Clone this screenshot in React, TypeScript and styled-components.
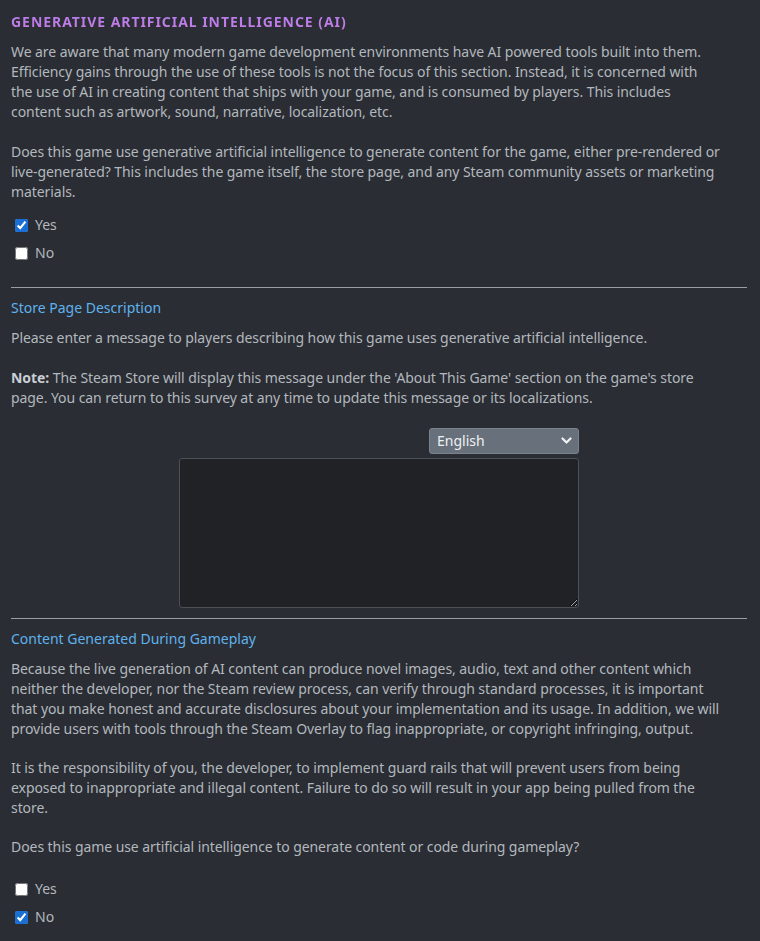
import React from "react";
import styled, { createGlobalStyle } from "styled-components";

const Global = createGlobalStyle`
  html, body { margin: 0; padding: 0; background: #2a2d33; }
  body { font-family: "Noto Sans", "Open Sans", Arial, sans-serif; }
`;

const Page = styled.div`
  background: #2a2d33;
  min-height: 941px;
  padding: 12px 13px 10px 11px;
  box-sizing: border-box;
  color: #b2b8be;
  font-size: 14px;
  line-height: 20px;
`;

const Title = styled.h2`
  margin: 0 0 10px;
  font-size: 14px;
  line-height: 20px;
  font-weight: 700;
  letter-spacing: 0.95px;
  text-transform: uppercase;
  display: inline-block;
  background: linear-gradient(180deg, #b47cf2 0%, #c97de0 100%);
  -webkit-background-clip: text;
  background-clip: text;
  color: transparent;
`;

const Paragraph = styled.p<{ $gap?: number }>`
  margin: 0 0 ${(p) => (p.$gap ?? 20)}px;
  padding-right: 26px;
  letter-spacing: -0.07px;
  color: #b2b8be;
`;

const Strong = styled.b`
  color: #c9cfd5;
  font-weight: 700;
`;

const Options = styled.div<{ $top: number }>`
  display: flex;
  flex-direction: column;
  margin-top: ${(p) => p.$top}px;
`;

const Option = styled.label`
  display: flex;
  align-items: center;
  height: 28px;
  color: #b2b8be;
  cursor: pointer;
`;

const Check = styled.input.attrs({ type: "checkbox" })`
  width: 13px;
  height: 13px;
  margin: 0 7px 0 4px;
  accent-color: #1a6fd4;
`;

const Divider = styled.hr<{ $top: number }>`
  border: none;
  height: 1px;
  background: #9a9ea3;
  margin: ${(p) => p.$top}px 0 10px;
`;

const SubTitle = styled.h3`
  margin: 0 0 10px;
  font-size: 14px;
  line-height: 20px;
  font-weight: 400;
  color: #5fb2ee;
`;

const EditorBlock = styled.div`
  display: flex;
  flex-direction: column;
  align-items: flex-end;
  width: 400px;
  margin: 0 auto;
  gap: 4px;
`;

const SelectWrap = styled.div`
  position: relative;
  width: 150px;
  height: 26px;
`;

const Select = styled.select`
  appearance: none;
  -webkit-appearance: none;
  width: 150px;
  height: 26px;
  box-sizing: border-box;
  padding: 0 24px 1px 7px;
  border: 1px solid #7a828c;
  border-radius: 3px;
  background: #67707b;
  color: #eef0f2;
  font-family: "Noto Sans", "Open Sans", Arial, sans-serif;
  font-size: 14px;
  outline: none;
`;

const Chevron = styled.svg`
  position: absolute;
  right: 7px;
  top: 8px;
  pointer-events: none;
`;

const TextArea = styled.textarea`
  display: block;
  width: 400px;
  height: 150px;
  box-sizing: border-box;
  background: #202226;
  border: 1px solid #4b4f56;
  border-radius: 3px;
  color: #dfe3e6;
  font-family: "Noto Sans", "Open Sans", Arial, sans-serif;
  font-size: 14px;
  outline: none;
  color-scheme: dark;
`;

export default function App() {
  return (
    <>
      <Global />
      <Page>
        <Title>Generative Artificial Intelligence (AI)</Title>
        <Paragraph>
          We are aware that many modern game development environments have AI powered tools built into them.
          Efficiency gains through the use of these tools is not the focus of this section. Instead, it is concerned with
          the use of AI in creating content that ships with your game, and is consumed by players. This includes
          content such as artwork, sound, narrative, localization, etc.
        </Paragraph>
        <Paragraph $gap={0}>
          Does this game use generative artificial intelligence to generate content for the game, either pre-rendered or
          live-generated? This includes the game itself, the store page, and any Steam community assets or marketing
          materials.
        </Paragraph>
        <Options $top={9}>
          <Option>
            <Check defaultChecked />
            Yes
          </Option>
          <Option>
            <Check />
            No
          </Option>
        </Options>

        <Divider $top={20} />
        <SubTitle>Store Page Description</SubTitle>
        <Paragraph>
          Please enter a message to players describing how this game uses generative artificial intelligence.
        </Paragraph>
        <Paragraph>
          <Strong>Note:</Strong> The Steam Store will display this message under the 'About This Game' section on the game's store
          page. You can return to this survey at any time to update this message or its localizations.
        </Paragraph>
        <EditorBlock>
          <SelectWrap>
            <Select defaultValue="english">
              <option value="english">English</option>
            </Select>
            <Chevron width="11" height="9" viewBox="0 0 11 9">
              <path d="M1.5 2.5 L5.5 6.5 L9.5 2.5" fill="none" stroke="#f2f2f2" strokeWidth="2.2" strokeLinecap="round" strokeLinejoin="round" />
            </Chevron>
          </SelectWrap>
          <TextArea />
        </EditorBlock>

        <Divider $top={10} />
        <SubTitle>Content Generated During Gameplay</SubTitle>
        <Paragraph $gap={19}>
          Because the live generation of AI content can produce novel images, audio, text and other content which
          neither the developer, nor the Steam review process, can verify through standard processes, it is important
          that you make honest and accurate disclosures about your implementation and its usage. In addition, we will
          provide users with tools through the Steam Overlay to flag inappropriate, or copyright infringing, output.
        </Paragraph>
        <Paragraph $gap={19}>
          It is the responsibility of you, the developer, to implement guard rails that will prevent users from being
          exposed to inappropriate and illegal content. Failure to do so will result in your app being pulled from the
          store.
        </Paragraph>
        <Paragraph $gap={0}>
          Does this game use artificial intelligence to generate content or code during gameplay?
        </Paragraph>
        <Options $top={18}>
          <Option>
            <Check />
            Yes
          </Option>
          <Option>
            <Check defaultChecked />
            No
          </Option>
        </Options>
      </Page>
    </>
  );
}
